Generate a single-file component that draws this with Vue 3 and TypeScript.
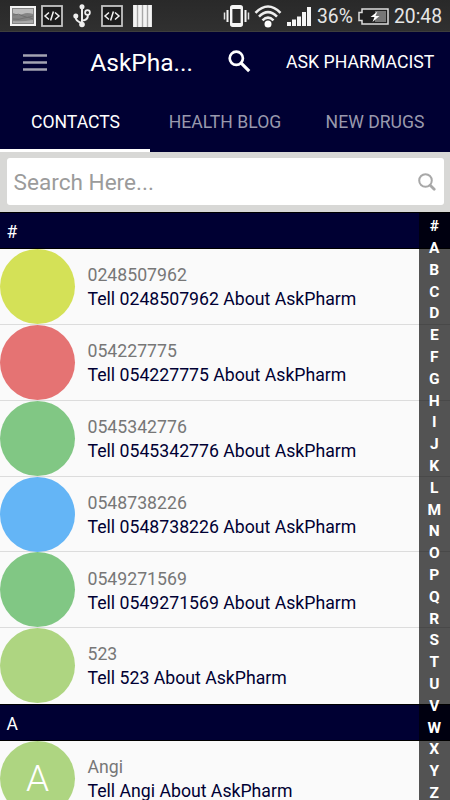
<script setup lang="ts">
interface Contact {
  name: string
  tone: string
  initial?: string
}
interface Section {
  title: string
  contacts: Contact[]
}

const tabs: string[] = ['CONTACTS', 'HEALTH BLOG', 'NEW DRUGS']
const sections: Section[] = [
  {
    title: '#',
    contacts: [
      { name: '0248507962', tone: 'lime' },
      { name: '054227775', tone: 'red' },
      { name: '0545342776', tone: 'green' },
      { name: '0548738226', tone: 'blue' },
      { name: '0549271569', tone: 'green' },
      { name: '523', tone: 'olive' },
    ],
  },
  { title: 'A', contacts: [{ name: 'Angi', tone: 'olive', initial: 'A' }] },
]
const letters: string[] = '#ABCDEFGHIJKLMNOPQRSTUVWXYZ'.split('')
</script>

<template>
  <div class="screen">
    <header class="status">
      <svg class="i-picture" width="26" height="20" viewBox="0 0 26 20">
        <rect x="1" y="1" width="24" height="18" fill="#858585" stroke="#f4f4f4" stroke-width="2" />
        <path d="M3 3h20v5q-6-2-10 0t-10-1z" fill="#bcbcbc" />
        <path d="M3 9q6-2 10 1t10 0M3 13q7 1 11-1t9 1" fill="none" stroke="#707070" />
        <path d="M3 15q8 1 20-1v3H3z" fill="#aaa" />
      </svg>
      <svg class="i-code" width="22" height="22" viewBox="0 0 22 22">
        <rect x="1" y="1" width="20" height="20" fill="#1c1c1c" stroke="#c4c4c4" stroke-width="1.8" />
        <path d="M8 7.500L4 11l4 3.500M14 7.500l4 3.500-4 3.500M12.400 6.500l-2.800 9" fill="none" stroke="#f2f2f2" stroke-width="1.5" />
      </svg>
      <svg class="i-usb" width="18" height="24" viewBox="0 0 18 24">
        <path d="M9 3v18M9 19c-4-1-6.500-3-6.500-6.500M9 16.500c4 0 6-2 6-6" fill="none" stroke="#eee" stroke-width="2" />
        <circle cx="9" cy="2.800" r="2.500" fill="#eee" />
        <circle cx="2.800" cy="12" r="2.500" fill="#eee" />
        <circle cx="14.500" cy="8.500" r="2.400" fill="#333" stroke="#eee" stroke-width="1.700" />
        <circle cx="9" cy="20.500" r="2.800" fill="#eee" />
      </svg>
      <svg class="i-code2" width="22" height="22" viewBox="0 0 22 22">
        <rect x="1" y="1" width="20" height="20" fill="#1c1c1c" stroke="#c4c4c4" stroke-width="1.8" />
        <path d="M8 7.500L4 11l4 3.500M14 7.500l4 3.500-4 3.500M12.400 6.500l-2.800 9" fill="none" stroke="#f2f2f2" stroke-width="1.5" />
      </svg>
      <svg class="i-bars" width="19" height="22" viewBox="0 0 19 22">
        <rect width="19" height="22" fill="#a8a8a8" />
        <path d="M2 0v22M7 0v22M12 0v22M17 0v22" stroke="#f4f4f4" stroke-width="3.600" />
      </svg>
      <svg class="i-vibrate" width="27" height="22" viewBox="0 0 27 22">
        <rect x="8.200" y="1.200" width="10.600" height="19.600" rx="1.500" fill="none" stroke="#f5f5f5" stroke-width="2.400" />
        <path d="M8 3h11M8 19h11" stroke="#f5f5f5" stroke-width="2" />
        <path d="M4.500 5v12M22.500 5v12" stroke="#f5f5f5" stroke-width="2" />
        <path d="M1.500 7.500v7M25.500 7.500v7" stroke="#e0e0e0" stroke-width="1.500" />
      </svg>
      <svg class="i-wifi" width="28" height="24" viewBox="0 0 28 24">
        <g fill="none" stroke="#eee" stroke-width="2.600">
          <path d="M1.500 8.800Q14-3.800 26.500 8.800" />
          <path d="M5 12.600Q14 3.600 23 12.600" />
          <path d="M8.500 16.300Q14 10.800 19.500 16.300" />
        </g>
        <circle cx="14" cy="20" r="3.500" fill="#fff" />
      </svg>
      <svg class="i-signal" width="25" height="19" viewBox="0 0 25 19">
        <path d="M0 15h4v4H0zM5 12.500h4V19H5zM10 9.500h4V19h-4zM15 5h4v14h-4zM20 0h4v19h-4z" fill="#f5f5f5" />
      </svg>
      <span class="percent">36%</span>
      <svg class="i-battery" width="31" height="17" viewBox="0 0 31 17">
        <path d="M4 1h26v15H4v-3.500H1v-8h3z" fill="#222" stroke="#ddd" stroke-width="1.500" />
        <rect x="17" y="3" width="11" height="11" fill="#777" />
        <path d="M19.500 3.500L12.500 9h4l-2 5 7-6h-4z" fill="#fff" />
      </svg>
      <span class="clock">20:48</span>
    </header>

    <div class="toolbar">
      <svg class="menu" width="24" height="17" viewBox="0 0 24 17">
        <path d="M0 1.500h24M0 8.500h24M0 15.500h24" stroke="#a3a3b2" stroke-width="2.400" />
      </svg>
      <h1>AskPha...</h1>
      <svg class="find" width="23" height="23" viewBox="0 0 23 23">
        <circle cx="8.300" cy="8.300" r="6.600" fill="none" stroke="#fff" stroke-width="2.700" />
        <path d="M13.200 13.200l8 8" stroke="#fff" stroke-width="3.200" />
      </svg>
      <span class="ask">ASK PHARMACIST</span>
    </div>

    <nav class="tabs">
      <div v-for="(tab, i) in tabs" :key="tab" class="tab" :class="{ active: i === 0 }">
        <span>{{ tab }}</span>
      </div>
    </nav>

    <div class="search">
      <div class="field">
        <span>Search Here...</span>
        <svg width="18" height="18" viewBox="0 0 18 18">
          <circle cx="7.500" cy="7.500" r="6.300" fill="none" stroke="#a8a8a8" stroke-width="2" />
          <path d="M12.200 12.200l4 4" stroke="#a8a8a8" stroke-width="2.800" stroke-linecap="round" />
        </svg>
      </div>
    </div>

    <main class="list">
      <section v-for="section in sections" :key="section.title">
        <h2>{{ section.title }}</h2>
        <div v-for="contact in section.contacts" :key="contact.name" class="row">
          <div class="avatar" :class="contact.tone">{{ contact.initial }}</div>
          <div class="text">
            <div class="name">{{ contact.name }}</div>
            <div class="tell">Tell {{ contact.name }} About AskPharm</div>
          </div>
        </div>
      </section>
      <aside class="index">
        <span v-for="letter in letters" :key="letter">{{ letter }}</span>
      </aside>
    </main>
  </div>
</template>

<style>
body {
  margin: 0;
  overflow: hidden;
}
</style>

<style scoped>
.screen {
  width: 450px;
  height: 800px;
  overflow: hidden;
  display: flex;
  flex-direction: column;
  background: #fafafa;
  font-family: Roboto, sans-serif;
}
svg {
  flex: none;
  display: block;
}
.status {
  flex: none;
  box-sizing: border-box;
  height: 32px;
  display: flex;
  align-items: center;
  padding: 1px 0 0 9.500px;
  background: linear-gradient(#292929, #303030);
  border-bottom: 1px solid #3d3d3d;
  color: #e6e6e6;
  font-size: 19.300px;
  white-space: nowrap;
}
.i-code { margin-left: 5.500px; }
.i-usb { margin-left: 10px; }
.i-code2 { margin-left: 10px; }
.i-bars { margin-left: 9.500px; }
.i-vibrate { margin-left: 71.500px; }
.i-wifi { margin-left: 3.500px; }
.i-signal { margin-left: 5.500px; }
.percent {
  width: 36px;
  margin-left: 5px;
}
.i-battery { margin-left: 4.500px; }
.clock { margin-left: 5.500px; }
.toolbar {
  flex: none;
  height: 60px;
  display: flex;
  align-items: center;
  background: #000033;
  color: #fff;
  white-space: nowrap;
}
.menu { margin-left: 23px; }
h1 {
  width: 104px;
  margin: 0 0 0 43.300px;
  font-size: 24.500px;
  font-weight: 400;
}
.find {
  margin: -2px 0 0 33.700px;
}
.ask {
  margin-left: 35px;
  font-size: 17.700px;
}
.tabs {
  flex: none;
  height: 59.500px;
  display: grid;
  grid-template-columns: repeat(3, 1fr);
  background: #000033;
  color: #9999ad;
  font-size: 17.600px;
}
.tab {
  box-sizing: border-box;
  display: flex;
  align-items: center;
  justify-content: center;
  padding-top: 4px;
  border-bottom: 3px solid transparent;
}
.active {
  padding-left: 1px;
  color: #fff;
  border-color: #fff;
}
.search {
  flex: none;
  box-sizing: border-box;
  height: 60.500px;
  padding: 6.500px 6.500px 7px 7px;
  background: #d8d8d6;
}
.field {
  box-sizing: border-box;
  height: 47px;
  display: flex;
  align-items: center;
  justify-content: space-between;
  padding: 1px 8px 0 6.500px;
  border-radius: 3px;
  background: #fff;
  color: #9b9b9b;
  font-size: 22.600px;
}
.list {
  position: relative;
  flex: 1;
  min-height: 0;
  overflow: hidden;
}
h2 {
  box-sizing: border-box;
  height: 37px;
  margin: 0;
  padding-left: 6.500px;
  border-top: 1px solid #000;
  border-bottom: 1px solid #000;
  background: #000033;
  color: #fff;
  font-size: 17.500px;
  font-weight: 400;
  line-height: 38px;
}
.row {
  box-sizing: border-box;
  height: 75.850px;
  display: flex;
  border-bottom: 1px solid #dcdcdc;
}
.row:last-child {
  border-color: transparent;
}
.avatar {
  flex: none;
  width: 75px;
  height: 75px;
  border-radius: 50%;
  color: #fff;
  font-size: 37px;
  font-weight: 300;
  line-height: 76px;
  text-align: center;
}
.lime { background: #d4e157; }
.red { background: #e57373; }
.green { background: #81c784; }
.blue { background: #64b5f6; }
.olive { background: #aed581; }
.text {
  padding: 14.250px 0 0 12.500px;
  font-size: 17.680px;
  line-height: 24px;
  white-space: nowrap;
}
.name { color: #777; }
.tell { color: #000033; }
.index {
  position: absolute;
  top: 0;
  right: 0;
  width: 31.500px;
  height: 100%;
  box-sizing: border-box;
  display: flex;
  flex-direction: column;
  gap: 8.800px;
  padding-top: 8.300px;
  background: rgba(0, 0, 0, 0.67);
  color: #fff;
  font-size: 15.500px;
  font-weight: 700;
  text-align: center;
}
.index span {
  flex: none;
  height: 13px;
  line-height: 13px;
}
</style>
